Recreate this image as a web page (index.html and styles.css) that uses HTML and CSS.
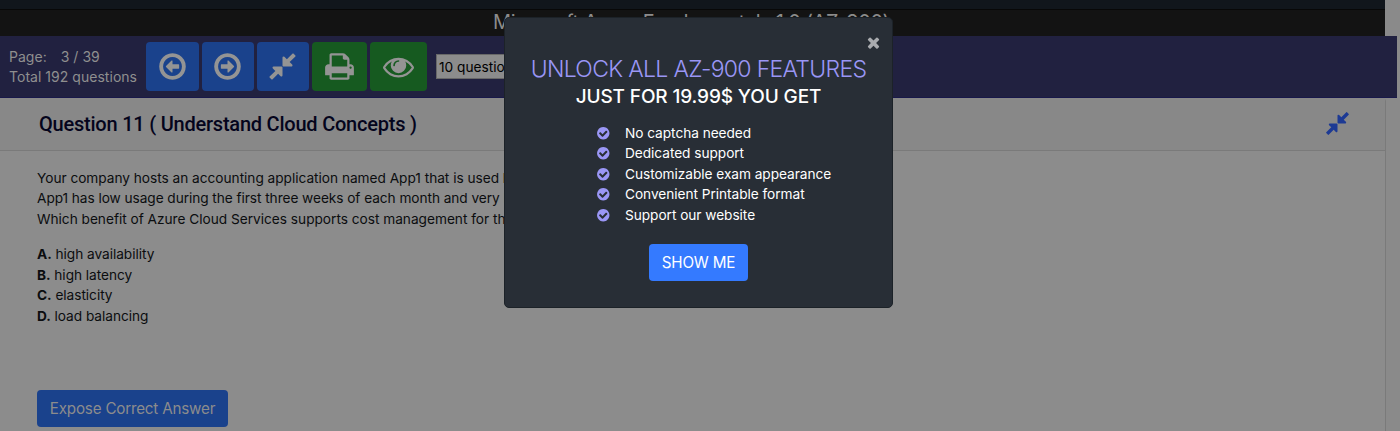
FILE: index.html
```html
<!DOCTYPE html>
<html lang="en">
<head>
<meta charset="utf-8">
<title>Microsoft Azure Fundamentals</title>
<link rel="stylesheet" href="styles.css">
</head>
<body>
<svg class="sprite" aria-hidden="true">
  <symbol id="left" viewBox="0 0 1792 1792"><path d="M1280 800v192q0 13-9.500 22.500t-22.500 9.500h-352v192q0 14-9 23t-23 9q-12 0-24-10l-319-319q-9-9-9-23t9-23l320-320q9-9 23-9 13 0 22.500 9.500t9.500 22.500v192h352q13 0 22.500 9.500t9.500 22.500zm160 96q0-148-73-273t-198-198-273-73-273 73-198 198-73 273 73 273 198 198 273 73 273-73 198-198 73-273zm224 0q0 209-103 385.500t-279.500 279.500-385.500 103-385.500-103-279.500-279.500-103-385.500 103-385.500 279.500-279.500 385.500-103 385.500 103 279.500 279.500 103 385.500z"/></symbol>
  <symbol id="compress" viewBox="0 0 1792 1792"><path d="M896 960v448q0 26-19 45t-45 19-45-19l-144-144-332 332q-10 10-23 10t-23-10l-114-114q-10-10-10-23t10-23l332-332-144-144q-19-19-19-45t19-45 45-19h448q26 0 45 19t19 45zm755-672q0 13-10 23l-332 332 144 144q19 19 19 45t-19 45-45 19h-448q-26 0-45-19t-19-45v-448q0-26 19-45t45-19 45 19l144 144 332-332q10-10 23-10t23 10l114 114q10 10 10 23z"/></symbol>
  <symbol id="print" viewBox="0 0 1792 1792"><path d="M448 1536h896v-256h-896v256zm0-640h896v-384h-160q-40 0-68-28t-28-68v-160h-640v640zm1152 64q0-26-19-45t-45-19-45 19-19 45 19 45 45 19 45-19 19-45zm128 0v416q0 13-9.500 22.500t-22.500 9.500h-224v160q0 40-28 68t-68 28h-960q-40 0-68-28t-28-68v-160h-224q-13 0-22.500-9.500t-9.500-22.500v-416q0-79 56.500-135.500t135.500-56.500h64v-544q0-40 28-68t68-28h672q40 0 88 20t76 48l152 152q28 28 48 76t20 88v256h64q79 0 135.500 56.500t56.500 135.500z"/></symbol>
  <symbol id="eye" viewBox="0 0 1792 1792"><path d="M1664 960q-152-236-381-353 61 104 61 225 0 185-131.500 316.500t-316.500 131.500-316.500-131.500-131.500-316.500q0-121 61-225-229 117-381 353 133 205 333.500 326.500t434.500 121.500 434.500-121.500 333.500-326.500zm-720-384q0-20-14-34t-34-14q-125 0-214.500 89.500t-89.500 214.500q0 20 14 34t34 14 34-14 14-34q0-86 61-147t147-61q20 0 34-14t14-34zm848 384q0 34-20 69-140 230-376.500 368.500t-499.500 138.500-499.500-139-376.500-368q-20-35-20-69t20-69q140-229 376.500-368t499.500-139 499.500 139 376.500 368q20 35 20 69z"/></symbol>
  <symbol id="times" viewBox="0 0 1792 1792"><path d="M1490 1322q0 40-28 68l-136 136q-28 28-68 28t-68-28l-294-294-294 294q-28 28-68 28t-68-28l-136-136q-28-28-28-68t28-68l294-294-294-294q-28-28-28-68t28-68l136-136q28-28 68-28t68 28l294 294 294-294q28-28 68-28t68 28l136 136q28 28 28 68t-28 68l-294 294 294 294q28 28 28 68z"/></symbol>
  <symbol id="check" viewBox="0 0 1792 1792"><path d="M1412 734q0-28-18-46l-91-90q-19-19-45-19t-45 19l-408 407-226-226q-19-19-45-19t-45 19l-91 90q-18 18-18 46 0 27 18 45l362 362q19 19 45 19 27 0 46-19l543-543q18-18 18-45zm252 162q0 209-103 385.500t-279.500 279.500-385.500 103-385.500-103-279.500-279.500-103-385.500 103-385.500 279.500-279.500 385.500-103 385.500 103 279.500 279.500 103 385.500z"/></symbol>
</svg>
<div class="strip"></div>
<div class="banner"><span class="banner-text">Microsoft Azure Fundamentals 1.0 (AZ-900)</span></div>
<nav class="toolbar">
  <div class="pages"><div class="page-now">Page: <span class="page-num">3 / 39</span></div><div class="page-total">Total 192 questions</div></div>
  <div class="buttons">
    <a class="tool w53"><svg class="icon"><use href="#left"/></svg></a>
    <a class="tool w51"><svg class="icon flip"><use href="#left"/></svg></a>
    <a class="tool w52"><svg class="icon"><use href="#compress"/></svg></a>
    <a class="tool green w54"><svg class="icon"><use href="#print"/></svg></a>
    <a class="tool green w57"><svg class="icon"><use href="#eye"/></svg></a>
  </div>
  <div class="select">10 questions</div>
</nav>
<main class="card">
  <header class="card-head"><h1 class="title">Question 11 ( Understand Cloud Concepts )</h1><svg class="collapse"><use href="#compress"/></svg></header>
  <div class="card-body">
    <p class="text"><span class="l1">Your company hosts an accounting application named App1 that is used by</span><br><span class="l2">App1 has low usage during the first three weeks of each month and very high</span><br><span class="l3">Which benefit of Azure Cloud Services supports cost management for this</span></p>
    <div class="answers">
      <div><b>A.</b> high availability</div>
      <div><b>B.</b> high latency</div>
      <div><b>C.</b> elasticity</div>
      <div><b>D.</b> load balancing</div>
    </div>
    <a class="expose"><span>Expose Correct Answer</span></a>
  </div>
</main>
<section class="modal">
  <svg class="close"><use href="#times"/></svg>
  <h2 class="headline"><span>UNLOCK ALL AZ-900 FEATURES</span></h2>
  <h3 class="sub"><span>JUST FOR 19.99$ YOU GET</span></h3>
  <ul class="perks">
    <li><svg class="tick"><use href="#check"/></svg>No captcha needed</li>
    <li><svg class="tick"><use href="#check"/></svg>Dedicated support</li>
    <li><svg class="tick"><use href="#check"/></svg>Customizable exam appearance</li>
    <li><svg class="tick"><use href="#check"/></svg>Convenient Printable format</li>
    <li><svg class="tick"><use href="#check"/></svg>Support our website</li>
  </ul>
  <a class="show"><span>SHOW ME</span></a>
</section>
</body>
</html>
```
FILE: styles.css
```css
* { box-sizing: border-box; }
html, body { margin: 0; height: 431px; overflow: hidden; }
body { background: #8a8a8a; font: 13.7px/20.5px Inter, "Liberation Sans", sans-serif; color: #0b0d0f; }
.sprite { position: absolute; width: 0; height: 0; }
svg { fill: currentColor; flex: none; display: block; }
.strip { width: 1385px; height: 9px; background: #11161c; }
.banner { width: 1385px; height: 27px; background: #131313; border-top: 1px solid #080808; color: #8c8c8c; font-size: 20px; line-height: 24px; padding-left: 493px; white-space: nowrap; letter-spacing: -.4px; }
.toolbar { width: 1397px; height: 61.5px; background: #212140; border-bottom: 1px solid #18184a; display: flex; align-items: flex-start; color: #8f8f8f; }
.pages { width: 146px; padding: 10.6px 0 0 9px; white-space: nowrap; font-size: 14px; letter-spacing: .03px; }
.page-num { margin-left: 10px; }
.buttons { display: flex; gap: 3px; padding-top: 6px; }
.tool { height: 49px; border-radius: 4px; background: #1a428c; color: #949494; display: flex; align-items: center; justify-content: center; }
.green { background: #165a20; }
.w53 { width: 53px; }
.w51 { width: 51.5px; }
.w52 { width: 52px; }
.w54 { width: 55px; }
.w57 { width: 57px; }
.icon { width: 31px; height: 31px; }
.flip { transform: scaleX(-1); }
.select { margin: 18px 0 0 9.5px; width: 110px; height: 25px; line-height: 24px; padding-left: 2px; background: #8c8c8c; border: 1px solid #686868; color: #000; }
.card { width: 1386px; height: 340px; background: #8c8c8c; border-right: 1px solid #7a7a7a; border-top-right-radius: 4px; }
.card-head { height: 53.5px; background: #888; border-bottom: 1px solid #7a7a7a; display: flex; align-items: center; justify-content: space-between; padding: 0 34.5px 0 39px; }
.title { margin: 0; font: 500 20px/24px Roboto, sans-serif; letter-spacing: -.22px; color: #04041c; }
.collapse { width: 27px; height: 27px; color: #1d3a94; }
.card-body { padding: 16.6px 37px 0; }
.text { margin: 0 0 15.4px; white-space: nowrap; }
.l1 { letter-spacing: -.03px; }
.l2 { letter-spacing: -.065px; }
.l3 { letter-spacing: -.02px; }
.answers { margin-bottom: 64px; letter-spacing: -.05px; }
.expose { display: flex; align-items: center; justify-content: center; width: 191px; height: 37px; border-radius: 4px; background: #1a428c; color: #8c8c8c; font-size: 15.2px; letter-spacing: -.2px; padding-top: 1px; white-space: nowrap; }
.modal { position: absolute; left: 504px; top: 17px; width: 389px; height: 291px; background: #282e36; border: 1px solid #1c2228; border-radius: 5px; color: #fff; display: flex; flex-direction: column; align-items: center; padding-top: 36px; }
.close { position: absolute; right: 10.5px; top: 16px; width: 17px; height: 17px; color: #a9abaf; }
.headline { margin: 0; font-size: 23px; line-height: 31px; font-weight: 300; letter-spacing: -.68px; color: #9a96f5; white-space: nowrap; }
.sub { margin: 0 0 14.5px; font-size: 19px; line-height: 23px; font-weight: 500; letter-spacing: -.12px; white-space: nowrap; }
.perks { list-style: none; margin: 0; padding: 0; width: 206px; align-self: flex-start; margin-left: 91px; letter-spacing: -.05px; }
.perks li { display: flex; align-items: center; height: 20.5px; white-space: nowrap; }
.tick { width: 14.500px; height: 14.500px; margin-right: 14.5px; color: #9a96f5; }
.show { margin-top: 18.5px; width: 99px; height: 37px; border-radius: 4px; background: #347aff; display: flex; align-items: center; justify-content: center; font-size: 15.2px; letter-spacing: -.15px; padding-top: 2px; white-space: nowrap; }
```
